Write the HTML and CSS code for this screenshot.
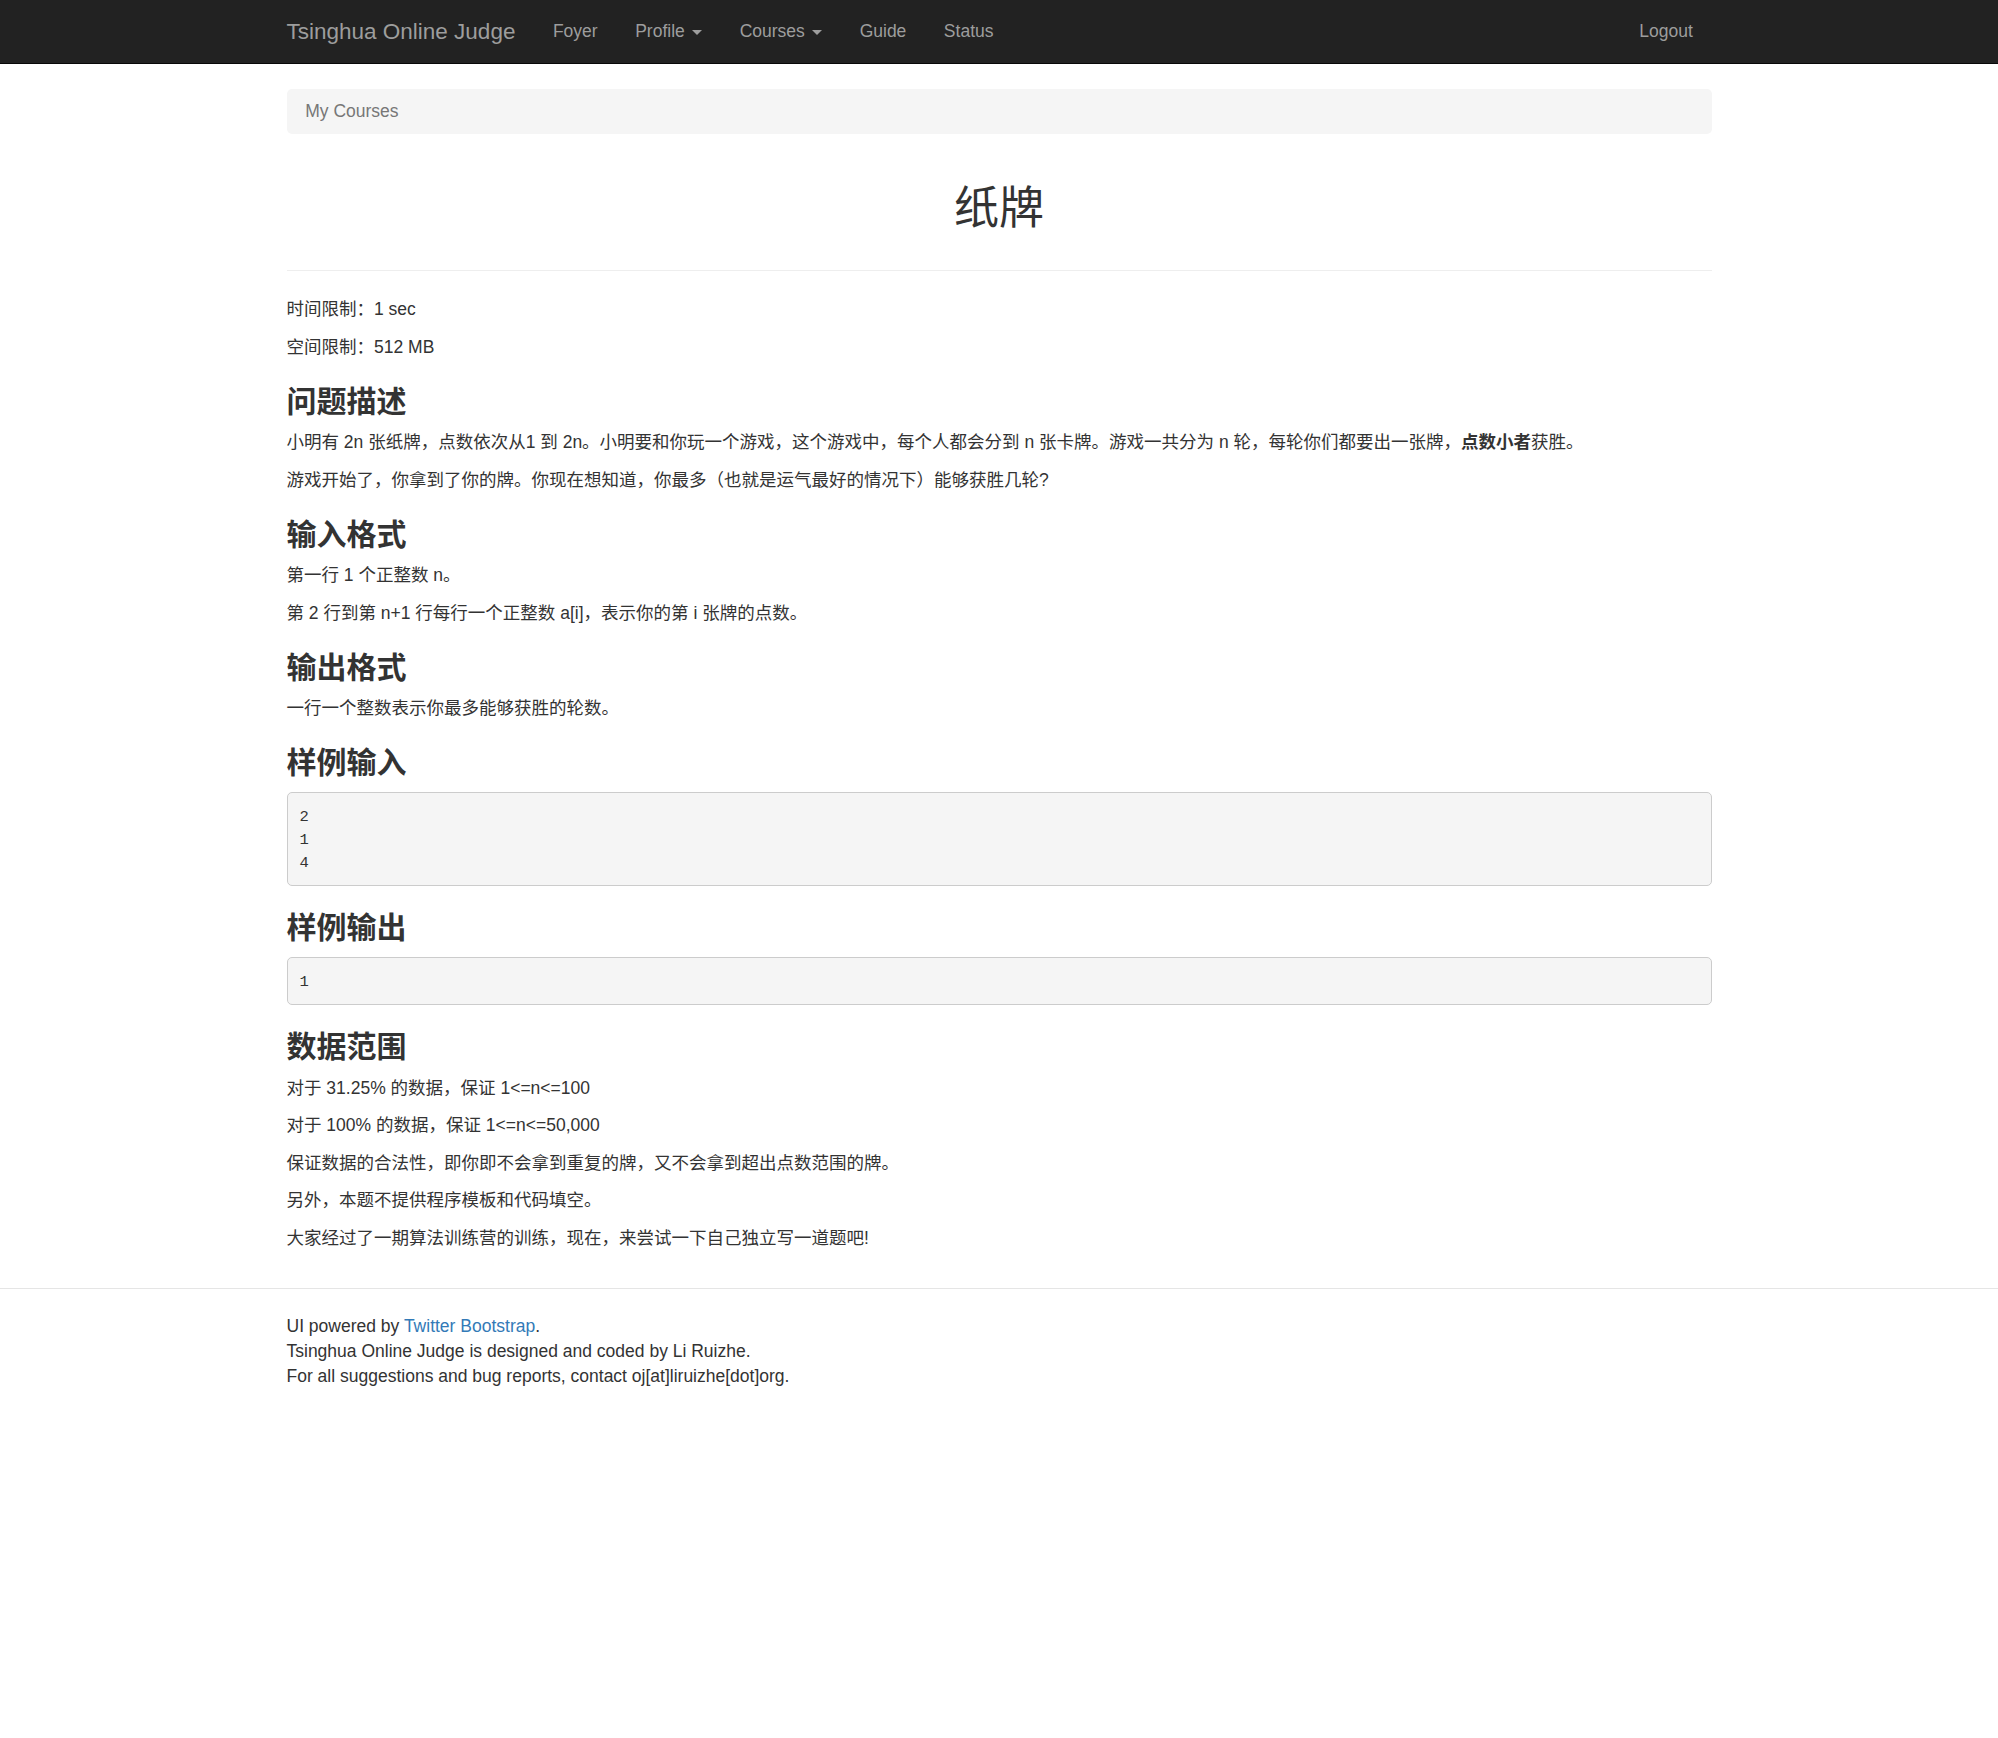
FILE: index.html
```html
<!DOCTYPE html>
<html lang="zh-CN">
<head>
<meta charset="utf-8">
<title>纸牌 - Tsinghua Online Judge</title>
<link rel="stylesheet" href="styles.css">
</head>
<body>
<nav class="navbar">
  <div class="container navbar-inner">
    <a class="brand" href="#">Tsinghua Online Judge</a>
    <ul class="nav">
      <li><a href="#">Foyer</a></li>
      <li><a href="#">Profile <span class="caret"></span></a></li>
      <li><a href="#">Courses <span class="caret"></span></a></li>
      <li><a href="#">Guide</a></li>
      <li><a href="#">Status</a></li>
    </ul>
    <ul class="nav nav-right">
      <li><a href="#">Logout</a></li>
    </ul>
  </div>
</nav>

<main class="container">
  <ol class="breadcrumb">
    <li class="active">My Courses</li>
  </ol>

  <div class="page-header">
    <h1>纸牌</h1>
  </div>

  <p>时间限制：1 sec</p>
  <p>空间限制：512 MB</p>

  <h3>问题描述</h3>
  <p>小明有 2n 张纸牌，点数依次从1 到 2n。小明要和你玩一个游戏，这个游戏中，每个人都会分到 n 张卡牌。游戏一共分为 n 轮，每轮你们都要出一张牌，<strong>点数小者</strong>获胜。</p>
  <p>游戏开始了，你拿到了你的牌。你现在想知道，你最多（也就是运气最好的情况下）能够获胜几轮?</p>

  <h3>输入格式</h3>
  <p>第一行 1 个正整数 n。</p>
  <p>第 2 行到第 n+1 行每行一个正整数 a[i]，表示你的第 i 张牌的点数。</p>

  <h3>输出格式</h3>
  <p>一行一个整数表示你最多能够获胜的轮数。</p>

  <h3>样例输入</h3>
  <pre>2
1
4</pre>

  <h3>样例输出</h3>
  <pre>1</pre>

  <h3>数据范围</h3>
  <p>对于 31.25% 的数据，保证 1&lt;=n&lt;=100</p>
  <p>对于 100% 的数据，保证 1&lt;=n&lt;=50,000</p>
  <p>保证数据的合法性，即你即不会拿到重复的牌，又不会拿到超出点数范围的牌。</p>
  <p>另外，本题不提供程序模板和代码填空。</p>
  <p>大家经过了一期算法训练营的训练，现在，来尝试一下自己独立写一道题吧!</p>
</main>

<footer class="footer">
  <div class="container">
    UI powered by <a href="#">Twitter Bootstrap</a>.<br>
    Tsinghua Online Judge is designed and coded by Li Ruizhe.<br>
    For all suggestions and bug reports, contact oj[at]liruizhe[dot]org.
  </div>
</footer>
</body>
</html>
```
FILE: styles.css
```css
* {
  box-sizing: border-box;
}

html, body {
  margin: 0;
  padding: 0;
  background: #fff;
}

body {
  font-family: "Liberation Sans", Arial, "Noto Sans CJK SC", sans-serif;
  font-size: 17.5px;
  line-height: 25px;
  color: #333;
}

a {
  color: #337ab7;
  text-decoration: none;
}

.container {
  width: 1462.5px;
  margin: 0 auto;
  padding: 0 18.75px;
}

/* Navbar */
.navbar {
  background: #222;
  border-bottom: 1px solid #080808;
  margin-bottom: 25px;
}

.navbar-inner {
  display: flex;
  align-items: stretch;
  height: 62.5px;
}

.brand {
  margin-left: -18.75px;
  padding: 18.75px;
  font-size: 22.5px;
  line-height: 25px;
  color: #9d9d9d;
}

.nav {
  display: flex;
  list-style: none;
  margin: 0;
  padding: 0;
}

.nav a {
  display: block;
  padding: 18.75px;
  line-height: 25px;
  color: #9d9d9d;
}

.nav-right {
  margin-left: auto;
}

.caret {
  display: inline-block;
  width: 0;
  height: 0;
  margin-left: 2.5px;
  vertical-align: middle;
  border-top: 5px solid #9d9d9d;
  border-left: 5px solid transparent;
  border-right: 5px solid transparent;
}

/* Breadcrumb */
.breadcrumb {
  list-style: none;
  margin: 0 0 25px;
  padding: 10px 18.75px;
  background: #f5f5f5;
  border-radius: 5px;
  color: #777;
}

/* Page header */
.page-header {
  margin: 50px 0 25px;
  padding-bottom: 24px;
  border-bottom: 1px solid #eee;
}

.page-header h1 {
  margin: 0 0 12.5px;
  text-align: center;
  font-size: 45px;
  line-height: 49.5px;
  font-weight: 400;
  color: #333;
}

p {
  margin: 0 0 12.5px;
}

.page-header + p {
  padding-top: 1.5px;
}

h3 {
  margin: 25px 0 12.5px;
  font-size: 30px;
  line-height: 33px;
  font-weight: 700;
  color: #333;
}

strong {
  font-weight: 700;
}

pre {
  margin: 0 0 25.5px;
  padding: 13.5px 11.875px 9.25px;
  font-family: "Liberation Mono", "DejaVu Sans Mono", monospace;
  font-size: 15.5px;
  line-height: 23.2px;
  color: #333;
  background: #f5f5f5;
  border: 1px solid #ccc;
  border-radius: 5px;
  white-space: pre-wrap;
}

main.container {
  padding-bottom: 25px;
}

/* Footer */
.footer {
  border-top: 1px solid #e5e5e5;
  padding: 25px 0 40px;
  color: #333;
}
```
